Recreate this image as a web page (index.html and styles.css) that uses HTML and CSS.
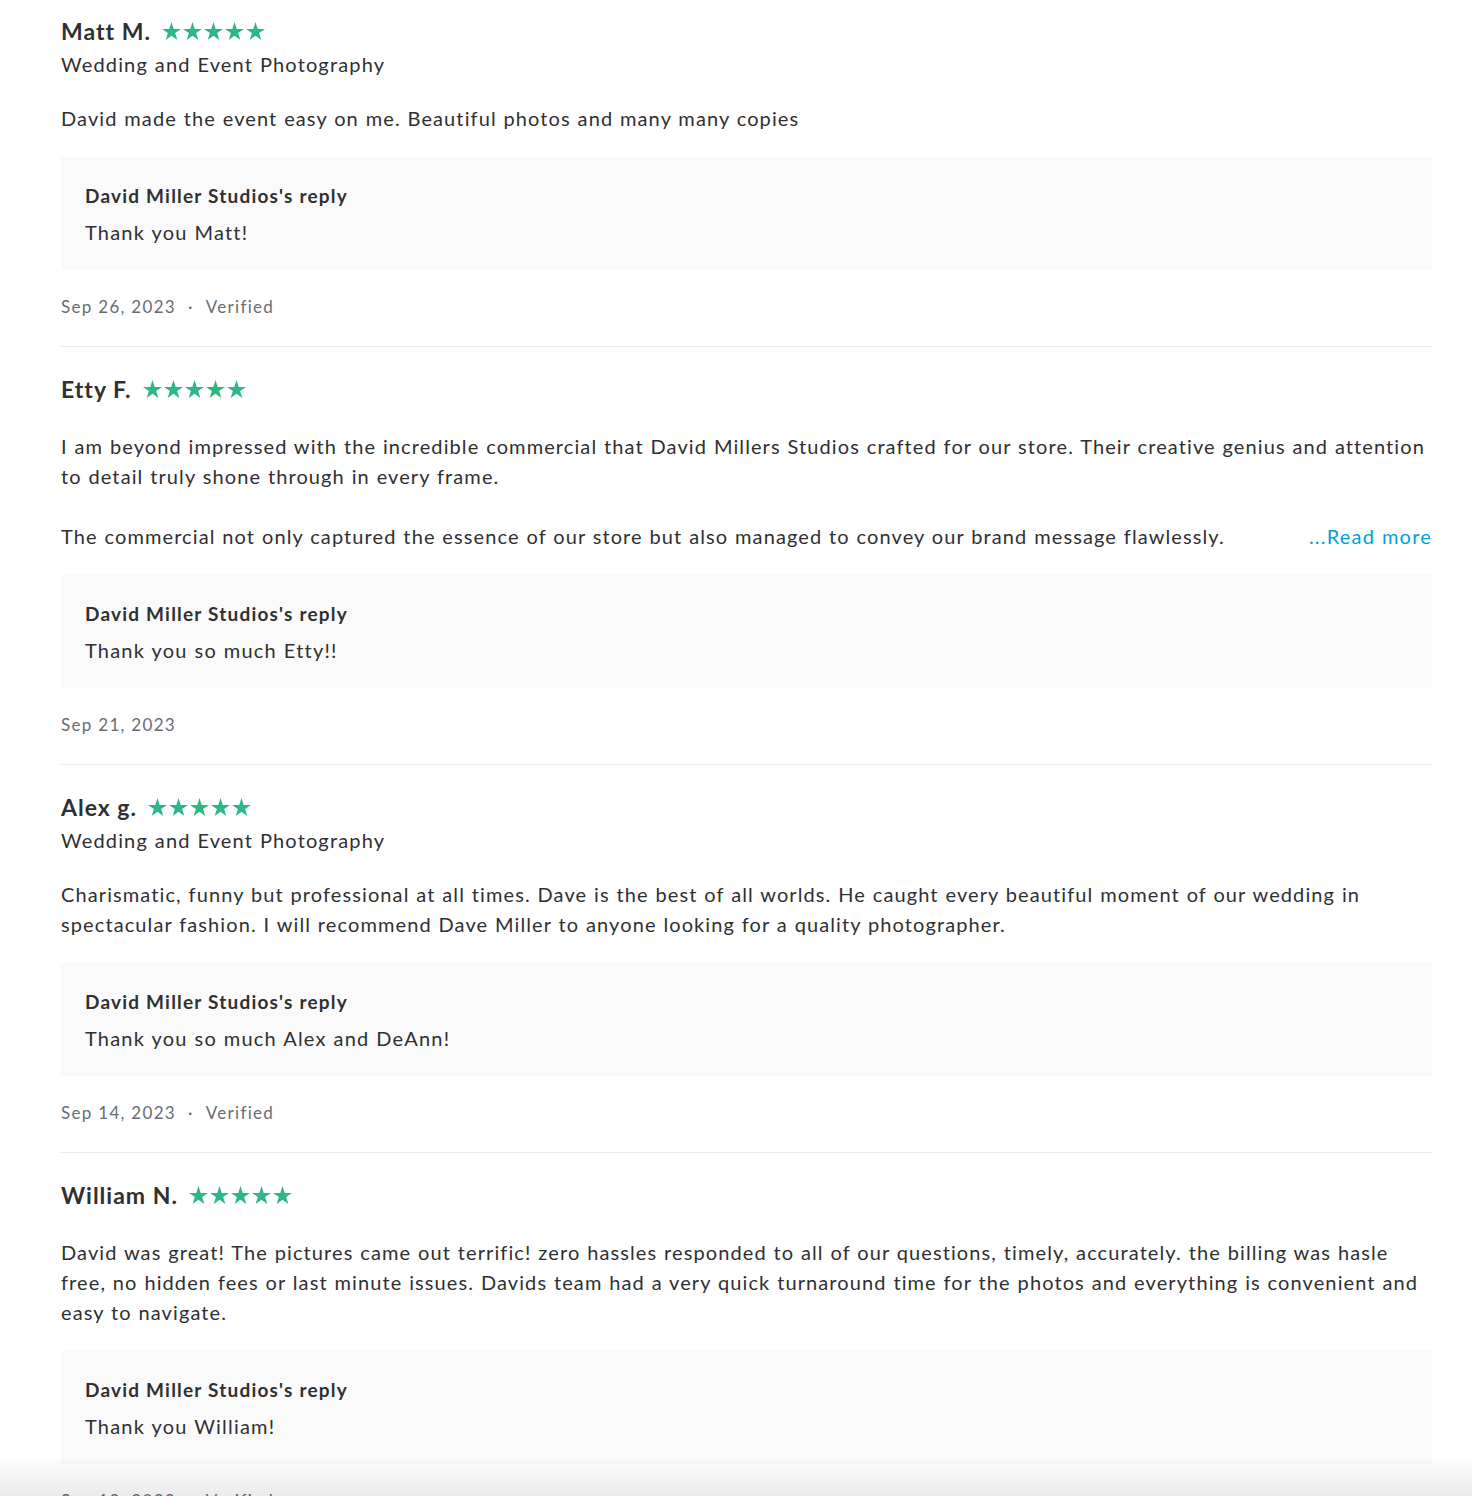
FILE: index.html
```html
<!DOCTYPE html>
<html lang="en">
<head>
<meta charset="utf-8">
<title>Reviews</title>
<link rel="stylesheet" href="styles.css">
</head>
<body>
<main class="reviews">
  <article class="review">
    <div class="review-head">
      <span class="reviewer">Matt M.</span>
      <span class="stars" aria-label="5 stars">
        <svg viewBox="0 0 20 19"><path d="M10 0l2.35 7.26H20l-6.18 4.48L16.18 19 10 14.52 3.82 19l2.36-7.26L0 7.26h7.65z"/></svg>
        <svg viewBox="0 0 20 19"><path d="M10 0l2.35 7.26H20l-6.18 4.48L16.18 19 10 14.52 3.82 19l2.36-7.26L0 7.26h7.65z"/></svg>
        <svg viewBox="0 0 20 19"><path d="M10 0l2.35 7.26H20l-6.18 4.48L16.18 19 10 14.52 3.82 19l2.36-7.26L0 7.26h7.65z"/></svg>
        <svg viewBox="0 0 20 19"><path d="M10 0l2.35 7.26H20l-6.18 4.48L16.18 19 10 14.52 3.82 19l2.36-7.26L0 7.26h7.65z"/></svg>
        <svg viewBox="0 0 20 19"><path d="M10 0l2.35 7.26H20l-6.18 4.48L16.18 19 10 14.52 3.82 19l2.36-7.26L0 7.26h7.65z"/></svg>
      </span>
    </div>
    <div class="service">Wedding and Event Photography</div>
    <div class="body">
      <p>David made the event easy on me. Beautiful photos and many many copies</p>
    </div>
    <div class="reply">
      <div class="reply-title">David Miller Studios's reply</div>
      <div class="reply-text">Thank you Matt!</div>
    </div>
    <div class="meta"><span>Sep 26, 2023</span><span class="dot">·</span><span>Verified</span></div>
  </article>

  <article class="review">
    <div class="review-head">
      <span class="reviewer">Etty F.</span>
      <span class="stars" aria-label="5 stars">
        <svg viewBox="0 0 20 19"><path d="M10 0l2.35 7.26H20l-6.18 4.48L16.18 19 10 14.52 3.82 19l2.36-7.26L0 7.26h7.65z"/></svg>
        <svg viewBox="0 0 20 19"><path d="M10 0l2.35 7.26H20l-6.18 4.48L16.18 19 10 14.52 3.82 19l2.36-7.26L0 7.26h7.65z"/></svg>
        <svg viewBox="0 0 20 19"><path d="M10 0l2.35 7.26H20l-6.18 4.48L16.18 19 10 14.52 3.82 19l2.36-7.26L0 7.26h7.65z"/></svg>
        <svg viewBox="0 0 20 19"><path d="M10 0l2.35 7.26H20l-6.18 4.48L16.18 19 10 14.52 3.82 19l2.36-7.26L0 7.26h7.65z"/></svg>
        <svg viewBox="0 0 20 19"><path d="M10 0l2.35 7.26H20l-6.18 4.48L16.18 19 10 14.52 3.82 19l2.36-7.26L0 7.26h7.65z"/></svg>
      </span>
    </div>
    <div class="body">
      <p>I am beyond impressed with the incredible commercial that David Millers Studios crafted for our store. Their creative genius and attention to detail truly shone through in every frame.</p>
      <p class="last-line"><span>The commercial not only captured the essence of our store but also managed to convey our brand message flawlessly.</span><a class="read-more" href="#">...Read more</a></p>
    </div>
    <div class="reply">
      <div class="reply-title">David Miller Studios's reply</div>
      <div class="reply-text">Thank you so much Etty!!</div>
    </div>
    <div class="meta"><span>Sep 21, 2023</span></div>
  </article>

  <article class="review">
    <div class="review-head">
      <span class="reviewer">Alex g.</span>
      <span class="stars" aria-label="5 stars">
        <svg viewBox="0 0 20 19"><path d="M10 0l2.35 7.26H20l-6.18 4.48L16.18 19 10 14.52 3.82 19l2.36-7.26L0 7.26h7.65z"/></svg>
        <svg viewBox="0 0 20 19"><path d="M10 0l2.35 7.26H20l-6.18 4.48L16.18 19 10 14.52 3.82 19l2.36-7.26L0 7.26h7.65z"/></svg>
        <svg viewBox="0 0 20 19"><path d="M10 0l2.35 7.26H20l-6.18 4.48L16.18 19 10 14.52 3.82 19l2.36-7.26L0 7.26h7.65z"/></svg>
        <svg viewBox="0 0 20 19"><path d="M10 0l2.35 7.26H20l-6.18 4.48L16.18 19 10 14.52 3.82 19l2.36-7.26L0 7.26h7.65z"/></svg>
        <svg viewBox="0 0 20 19"><path d="M10 0l2.35 7.26H20l-6.18 4.48L16.18 19 10 14.52 3.82 19l2.36-7.26L0 7.26h7.65z"/></svg>
      </span>
    </div>
    <div class="service">Wedding and Event Photography</div>
    <div class="body">
      <p>Charismatic, funny but professional at all times. Dave is the best of all worlds. He caught every beautiful moment of our wedding in spectacular fashion. I will recommend Dave Miller to anyone looking for a quality photographer.</p>
    </div>
    <div class="reply">
      <div class="reply-title">David Miller Studios's reply</div>
      <div class="reply-text">Thank you so much Alex and DeAnn!</div>
    </div>
    <div class="meta"><span>Sep 14, 2023</span><span class="dot">·</span><span>Verified</span></div>
  </article>

  <article class="review">
    <div class="review-head">
      <span class="reviewer">William N.</span>
      <span class="stars" aria-label="5 stars">
        <svg viewBox="0 0 20 19"><path d="M10 0l2.35 7.26H20l-6.18 4.48L16.18 19 10 14.52 3.82 19l2.36-7.26L0 7.26h7.65z"/></svg>
        <svg viewBox="0 0 20 19"><path d="M10 0l2.35 7.26H20l-6.18 4.48L16.18 19 10 14.52 3.82 19l2.36-7.26L0 7.26h7.65z"/></svg>
        <svg viewBox="0 0 20 19"><path d="M10 0l2.35 7.26H20l-6.18 4.48L16.18 19 10 14.52 3.82 19l2.36-7.26L0 7.26h7.65z"/></svg>
        <svg viewBox="0 0 20 19"><path d="M10 0l2.35 7.26H20l-6.18 4.48L16.18 19 10 14.52 3.82 19l2.36-7.26L0 7.26h7.65z"/></svg>
        <svg viewBox="0 0 20 19"><path d="M10 0l2.35 7.26H20l-6.18 4.48L16.18 19 10 14.52 3.82 19l2.36-7.26L0 7.26h7.65z"/></svg>
      </span>
    </div>
    <div class="body">
      <p>David was great! The pictures came out terrific! zero hassles responded to all of our questions, timely, accurately. the billing was hasle free, no hidden fees or last minute issues. Davids team had a very quick turnaround time for the photos and everything is convenient and easy to navigate.</p>
    </div>
    <div class="reply">
      <div class="reply-title">David Miller Studios's reply</div>
      <div class="reply-text">Thank you William!</div>
    </div>
    <div class="meta"><span>Sep 12, 2023</span><span class="dot">·</span><span>Verified</span></div>
  </article>
</main>
<div class="bottom-shade"></div>
</body>
</html>
```

FILE: styles.css
```css
* { box-sizing: border-box; }
html, body { margin: 0; padding: 0; background: #ffffff; }
body {
  font-family: Lato, "Noto Sans", sans-serif;
  color: #2f3033;
  overflow: hidden;
  height: 1496px;
}
.reviews {
  width: 1371px;
  margin-left: 61px;
}
.review {
  padding: 24px 0 27px;
  border-bottom: 1px solid #e9e9e9;
}
.review:first-child { padding-top: 13px; }
.review-head {
  display: flex;
  align-items: center;
  height: 36px;
}
.reviewer {
  font-size: 23px;
  font-weight: 700;
  letter-spacing: 1px;
  line-height: 36px;
}
.stars {
  display: flex;
  gap: 2px;
  margin-left: 11px;
  margin-top: -1px;
}
.stars svg {
  width: 19px;
  height: 18px;
  fill: #2db783;
  display: block;
}
.service {
  font-size: 20px;
  line-height: 30px;
  letter-spacing: 1.15px;
  word-spacing: 0.6px;
}
.body {
  margin-top: 24px;
  font-size: 20px;
  line-height: 30px;
  letter-spacing: 1.1px;
  word-spacing: 0.6px;
}
.body p { margin: 0; }
.body p + p { margin-top: 30px; }
.last-line {
  display: flex;
  justify-content: space-between;
}
.read-more {
  color: #009fd9;
  text-decoration: none;
  letter-spacing: 1.2px;
}
.reply {
  margin-top: 24px;
  background: #fafafa;
  padding: 24px 24px 23px;
}
.reply-title {
  font-size: 19px;
  font-weight: 700;
  line-height: 30px;
  letter-spacing: 1.2px;
}
.reply-text {
  margin-top: 6px;
  font-size: 20px;
  line-height: 30px;
  letter-spacing: 1.2px;
  word-spacing: 0.6px;
}
.meta {
  margin-top: 25px;
  display: flex;
  font-size: 17px;
  line-height: 24px;
  color: #676d73;
  letter-spacing: 1.3px;
}
.dot { margin: 0 12px; }
.bottom-shade {
  position: fixed;
  left: 0;
  right: 0;
  bottom: 0;
  height: 36px;
  background: linear-gradient(to bottom, rgba(0,0,0,0.01), rgba(0,0,0,0.08));
  pointer-events: none;
}
```
